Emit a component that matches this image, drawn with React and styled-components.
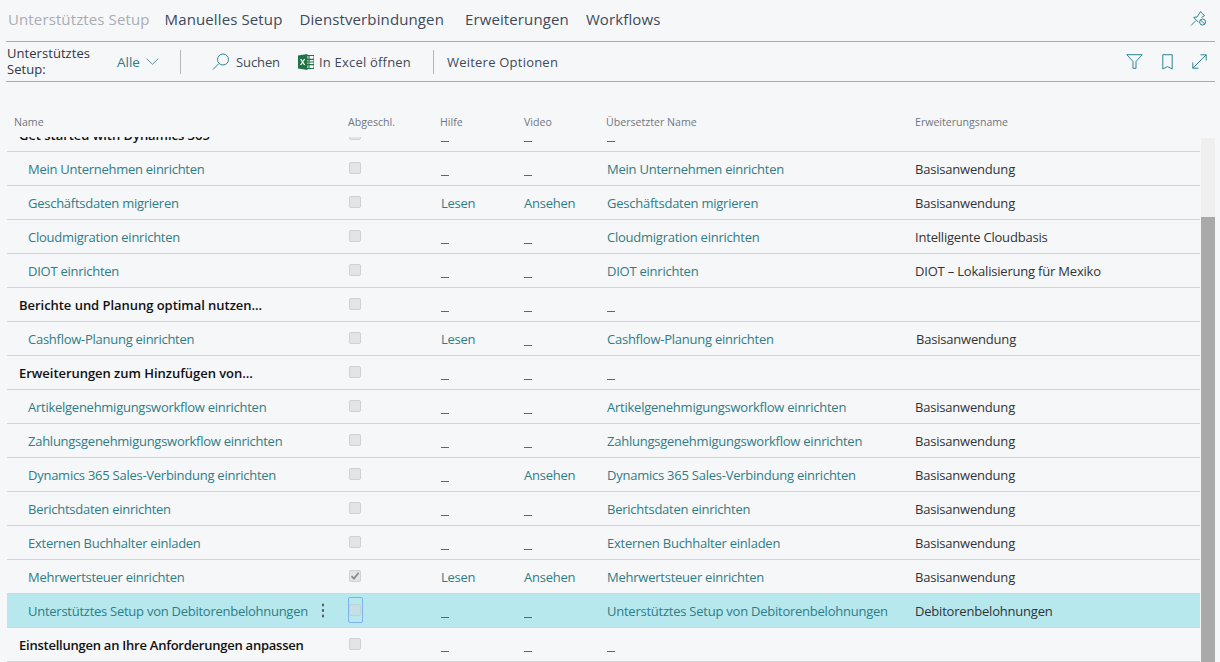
import React from "react";
import styled, { createGlobalStyle } from "styled-components";

const Global = createGlobalStyle`
  html, body { margin: 0; padding: 0; background: #f6f7f9; }
  body { font-family: "Open Sans", "Noto Sans", sans-serif; width: 1220px; height: 662px; overflow: hidden; }
`;
const Page = styled.div`
  width: 1220px; height: 662px; padding: 0 5px 0 6px; box-sizing: border-box; overflow: hidden;
  display: flex; flex-direction: column;
`;
const Tabs = styled.div`
  flex: none; border-bottom: 1px solid #a9abae;
  display: flex; align-items: center; padding: 0 0 4px 2px; box-sizing: border-box; height: 42px;
`;
const Tab = styled.span`
  font-size: 15px; color: ${p => (p.$active ? "#a9adb3" : "#3e4a5a")}; margin-right: ${p => p.$gap}px; letter-spacing: 0.12px; white-space: nowrap;
`;
const Spacer = styled.div`flex: 1;`;
const PinBtn = styled.span`display: flex; margin-right: 8px;`;
const Toolbar = styled.div`
  height: 40px; flex: none; border-bottom: 1px solid #a9abae; box-sizing: border-box;
  display: flex; align-items: center; padding-left: 1px;
`;
const FilterLabel = styled.div`
  width: 110px; font-size: 13px; line-height: 15.5px; color: #2e3744; letter-spacing: 0.05px;
`;
const AllBtn = styled.span`
  display: flex; align-items: center; gap: 6px; width: 63px; font-size: 13.5px; color: #2e7d86;
`;
const Sep = styled.span`width: 1px; height: 24px; background: #b4b6b9; flex: none;`;
const Action = styled.span`
  display: flex; align-items: center; gap: ${p => p.$gap || 5}px; font-size: 13px; color: #3e4a5a; letter-spacing: ${p => p.$ls ?? -0.1}px; white-space: nowrap;
  margin-left: ${p => p.$ml || 0}px; margin-right: ${p => p.$mr || 0}px;
`;
const RightIcons = styled.div`display: flex; align-items: center; gap: 19px; padding-right: 8px;`;
const Columns = "341px 92px 84px 82px 309px 1fr";
const Head = styled.div`
  flex: none; height: 55px; box-sizing: border-box; padding: 33px 0 0 1px; width: 1194px;
  display: grid; grid-template-columns: ${Columns};
`;
const HeadCell = styled.span`
  font-size: 10.6px; line-height: 15px; color: #70767f; padding-left: ${p => p.$pl || 0}px; white-space: nowrap;
`;
const Body = styled.div`flex: 1; min-height: 0; display: flex; overflow: hidden; margin-left: 1px;`;
const Rows = styled.div`flex: 1; min-width: 0; overflow: hidden;`;
const Inner = styled.div`margin-top: -19px;`;
const Row = styled.div`
  display: grid; grid-template-columns: ${Columns}; height: 34px; box-sizing: border-box;
  border-bottom: 1px solid #d2d4d7; align-items: center; background: ${p => (p.$sel ? "#b6e8ee" : "transparent")};
`;
const NameCell = styled.div`
  display: flex; align-items: center; justify-content: space-between; padding-left: ${p => (p.$bold ? 12 : 21)}px; min-width: 0;
  font-size: 13px; white-space: nowrap; letter-spacing: ${p => (p.$bold ? (p.$tight ? -0.24 : -0.04) : -0.26)}px;
  color: ${p => (p.$bold ? "#111" : "#2e7d86")}; font-weight: ${p => (p.$bold ? 600 : 400)};
`;
const Dots = styled.span`
  width: 2.5px; height: 2.5px; border-radius: 50%; background: #555; box-shadow: 0 -5.5px 0 #555, 0 5.5px 0 #555; margin-right: 24px; flex: none;
`;
const CheckCell = styled.div`display: flex; padding-left: 1px; margin-top: -1px; position: relative;`;
const Check = styled.span`
  width: 12px; height: 12px; box-sizing: border-box; border-radius: 2px; border: 1px solid #cfd1d4; background: #e3e4e6; display: flex;
  align-items: center; justify-content: center;
`;
const Focus = styled.span`
  position: absolute; left: 0; top: -7px; width: 15px; height: 26px; box-sizing: border-box; border: 1.5px solid #7fb2ef; border-radius: 2px;
`;
const SelCheck = styled(Check)`background: #c7e0e5; border-color: #bcd3d9;`;
const LinkCell = styled.span`
  font-size: 13px; color: #2e7d86; padding-left: ${p => p.$pl ?? 1}px; letter-spacing: -0.24px; white-space: nowrap;
`;
const Dash = styled.span`
  display: block; width: 8px; height: 1px; background: #3c7480; margin: 13px 0 0 ${p => p.$ml ?? 1}px;
`;
const PlainCell = styled.span`
  font-size: 13px; color: #333; letter-spacing: -0.2px; white-space: nowrap; padding-left: ${p => p.$pl || 0}px;
`;
const Scroll = styled.div`width: 14px; flex: none; margin: 1px 0 0 1px; background: #efefef; display: flex; flex-direction: column;`;
const Thumb = styled.div`margin-top: 79px; flex: 1; background: #a9a9a9;`;

const Pin = () => (
  <svg width="17" height="17" viewBox="0 0 17 17" fill="none" stroke="#2f8590" strokeWidth="1">
    <path d="M1 15.5 6 10.5M3.6 7.4 7.2 6.9 10.6 1.5 12 3.4 14.6 5.6 11.5 7.5M3.6 7.4l5 5" />
    <circle cx="12.6" cy="12" r="3" />
    <path d="M10.6 10 14.6 14" />
  </svg>
);
const Funnel = () => (
  <svg width="17" height="15" viewBox="0 0 17 15" fill="none" stroke="#2f8590" strokeWidth="1">
    <path d="M.8.7h15.4L10 7.5v6.8H7V7.5z" />
  </svg>
);
const Bookmark = () => (
  <svg width="11" height="16" viewBox="0 0 11 16" fill="none" stroke="#2f8590" strokeWidth="1">
    <path d="M.8.7h9.4v14.3L5.5 12.6.8 15z" />
  </svg>
);
const Expand = () => (
  <svg width="15" height="15" viewBox="0 0 15 15" fill="none" stroke="#2f8590" strokeWidth="1">
    <path d="M.8 14.2 14.2.8M8.5.8h5.7v5.7M.8 8.5v5.7h5.7" />
  </svg>
);
const Search = () => (
  <svg width="18" height="17" viewBox="0 0 18 17" fill="none" stroke="#2f8590" strokeWidth="1">
    <circle cx="11" cy="6.5" r="5.5" />
    <path d="M7 10.5 1 16.5" />
  </svg>
);
const Chevron = () => (
  <svg width="13" height="7" viewBox="0 0 13 7" fill="none" stroke="#5a8a95" strokeWidth="1">
    <path d="M.7.7 6.5 6.3 12.3.7" />
  </svg>
);
const Excel = () => (
  <svg width="16" height="16" viewBox="0 0 16 16">
    <rect x="7" y="1.5" width="9" height="13" fill="#fff" stroke="#1f7244" />
    <path d="M11 2v12M7 5.3h9M7 8h9M7 10.7h9" stroke="#1f7244" strokeWidth="1.2" />
    <path d="M0 1.5 9.5 0v16L0 14.5z" fill="#1f7244" />
    <path d="M2.6 5 6.6 11M6.6 5 2.6 11" stroke="#fff" strokeWidth="1.3" />
  </svg>
);
const Tick = () => (
  <svg width="10" height="10" viewBox="0 0 10 10" fill="none" stroke="#8a8c90" strokeWidth="1.8">
    <path d="M1.5 5.2 4 7.6 8.6 1.8" />
  </svg>
);

const rows = [
  { name: "Get started with Dynamics 365", bold: true },
  { name: "Mein Unternehmen einrichten", ext: "Basisanwendung" },
  { name: "Geschäftsdaten migrieren", help: true, video: true, ext: "Basisanwendung" },
  { name: "Cloudmigration einrichten", ext: "Intelligente Cloudbasis" },
  { name: "DIOT einrichten", ext: "DIOT – Lokalisierung für Mexiko" },
  { name: "Berichte und Planung optimal nutzen...", bold: true },
  { name: "Cashflow-Planung einrichten", help: true, ext: "Basisanwendung", extPl: 1 },
  { name: "Erweiterungen zum Hinzufügen von...", bold: true },
  { name: "Artikelgenehmigungsworkflow einrichten", ext: "Basisanwendung" },
  { name: "Zahlungsgenehmigungsworkflow einrichten", ext: "Basisanwendung" },
  { name: "Dynamics 365 Sales-Verbindung einrichten", video: true, ext: "Basisanwendung" },
  { name: "Berichtsdaten einrichten", ext: "Basisanwendung" },
  { name: "Externen Buchhalter einladen", ext: "Basisanwendung" },
  { name: "Mehrwertsteuer einrichten", checked: true, help: true, video: true, ext: "Basisanwendung" },
  { name: "Unterstütztes Setup von Debitorenbelohnungen", sel: true, ext: "Debitorenbelohnungen" },
  { name: "Einstellungen an Ihre Anforderungen anpassen", bold: true, tight: true },
];

export default function App() {
  return (
    <Page>
      <Global />
      <Tabs>
        <Tab $active $gap={15}>Unterstütztes Setup</Tab>
        <Tab $gap={17}>Manuelles Setup</Tab>
        <Tab $gap={21}>Dienstverbindungen</Tab>
        <Tab $gap={17}>Erweiterungen</Tab>
        <Tab $gap={0}>Workflows</Tab>
        <Spacer />
        <PinBtn><Pin /></PinBtn>
      </Tabs>
      <Toolbar>
        <FilterLabel>Unterstütztes Setup:</FilterLabel>
        <AllBtn>Alle <Chevron /></AllBtn>
        <Sep />
        <Action $ml={31} $mr={18} $gap={6}><Search />Suchen</Action>
        <Action $mr={22} $gap={5} $ls={0.2}><Excel />In Excel öffnen</Action>
        <Sep />
        <Action $ml={13} $ls={0.22}>Weitere Optionen</Action>
        <Spacer />
        <RightIcons><Funnel /><Bookmark /><Expand /></RightIcons>
      </Toolbar>
      <Head>
        <HeadCell $pl={7}>Name</HeadCell>
        <HeadCell>Abgeschl.</HeadCell>
        <HeadCell>Hilfe</HeadCell>
        <HeadCell>Video</HeadCell>
        <HeadCell>Übersetzter Name</HeadCell>
        <HeadCell>Erweiterungsname</HeadCell>
      </Head>
      <Body>
        <Rows>
          <Inner>
            {rows.map(r => (
              <Row key={r.name} $sel={r.sel}>
                <NameCell $bold={r.bold} $tight={r.tight}>
                  {r.name}
                  {r.sel && <Dots />}
                </NameCell>
                <CheckCell>
                  {r.sel ? <><SelCheck /><Focus /></> : <Check>{r.checked && <Tick />}</Check>}
                </CheckCell>
                {r.help ? <LinkCell>Lesen</LinkCell> : <Dash />}
                {r.video ? <LinkCell $pl={0}>Ansehen</LinkCell> : <Dash $ml={0} />}
                {r.bold ? <Dash /> : <LinkCell>{r.name}</LinkCell>}
                <PlainCell $pl={r.extPl}>{r.ext}</PlainCell>
              </Row>
            ))}
          </Inner>
        </Rows>
        <Scroll><Thumb /></Scroll>
      </Body>
    </Page>
  );
}
